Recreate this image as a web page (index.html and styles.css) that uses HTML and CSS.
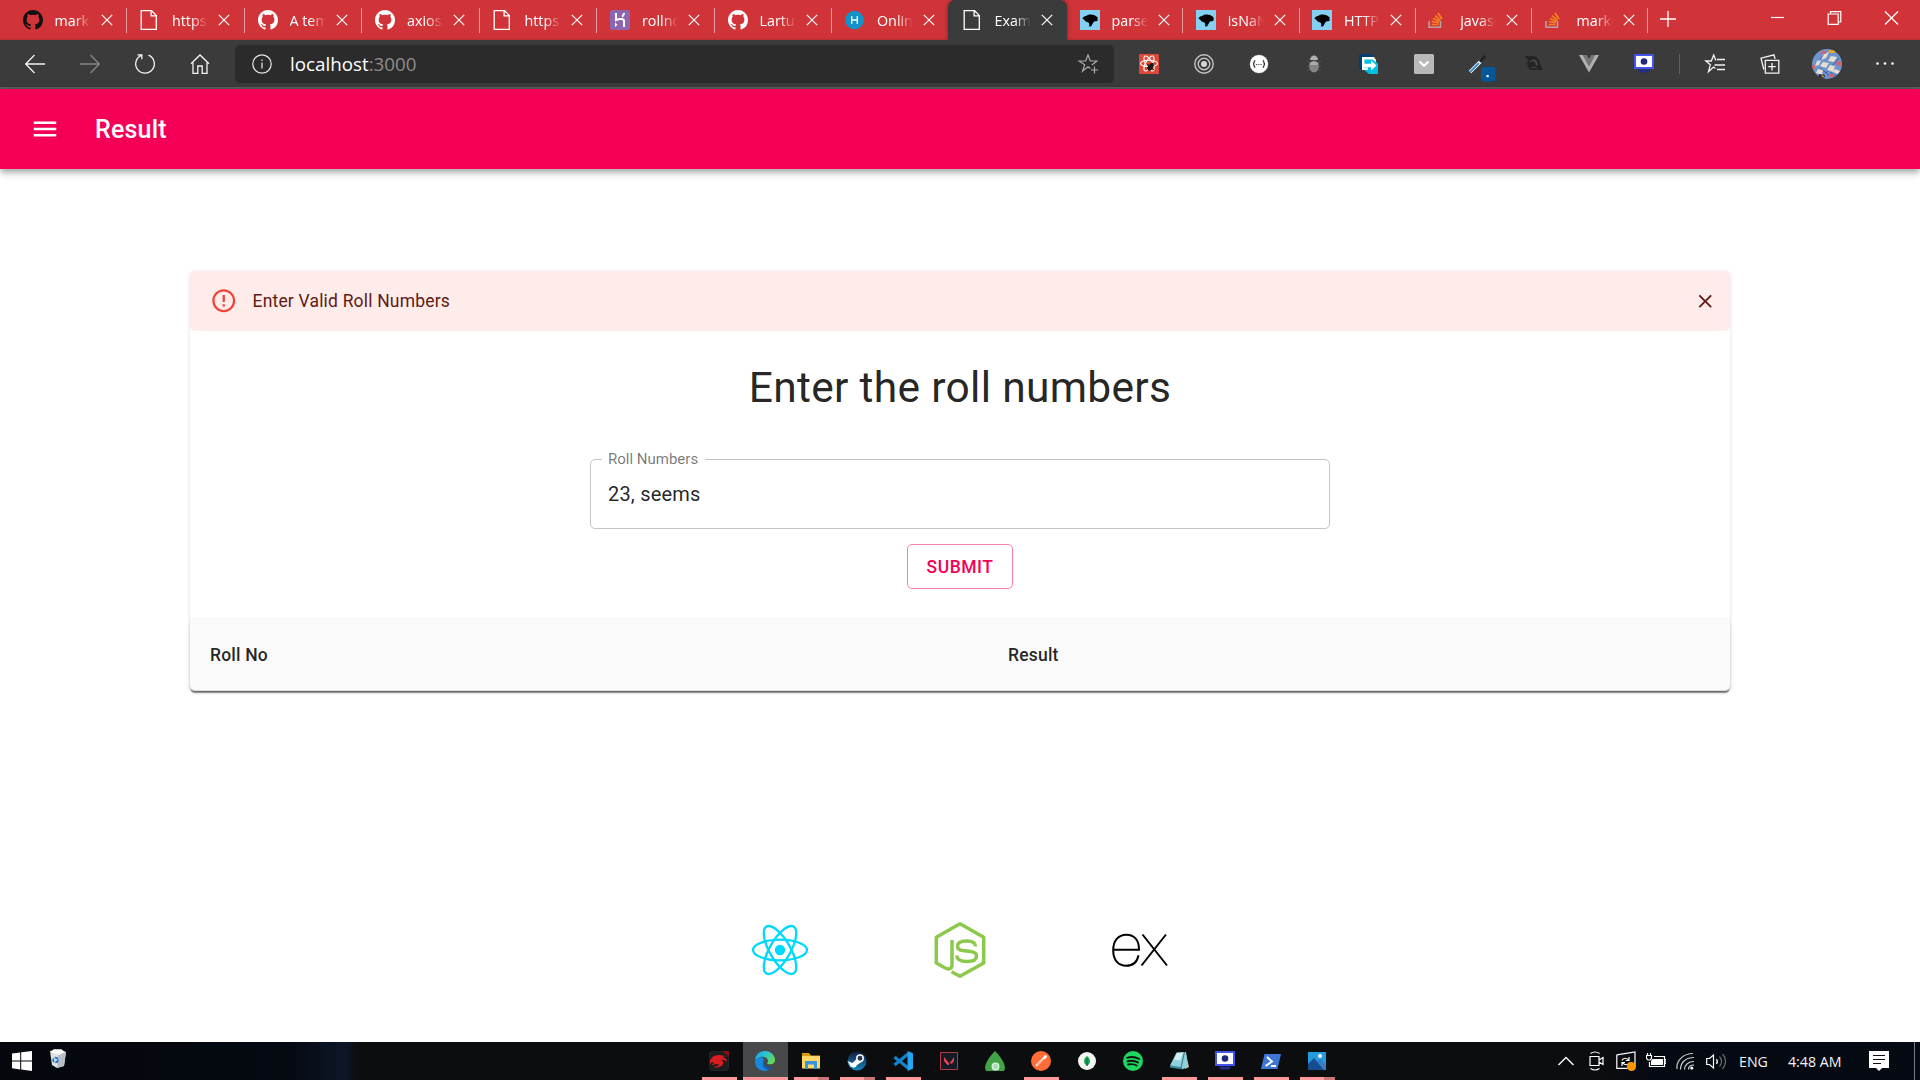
FILE: index.html
```html
<!DOCTYPE html>
<html lang="en">
<head>
<meta charset="utf-8">
<title>Exam Result</title>
<link rel="stylesheet" href="styles.css">
</head>
<body>
<svg class="defs" width="0" height="0">
  <symbol id="github" viewBox="0 0 16 16"><path fill="currentColor" d="M8 0C3.58 0 0 3.58 0 8c0 3.54 2.29 6.53 5.47 7.59.4.07.55-.17.55-.38 0-.19-.01-.82-.01-1.49-2.01.37-2.53-.49-2.69-.94-.09-.23-.48-.94-.82-1.13-.28-.15-.68-.52-.01-.53.63-.01 1.08.58 1.23.82.72 1.21 1.87.87 2.33.66.07-.52.28-.87.51-1.07-1.78-.2-3.64-.89-3.64-3.95 0-.87.31-1.59.82-2.15-.08-.2-.36-1.02.08-2.12 0 0 .67-.21 2.2.82.64-.18 1.32-.27 2-.27s1.36.09 2 .27c1.53-1.04 2.2-.82 2.2-.82.44 1.1.16 1.92.08 2.12.51.56.82 1.27.82 2.15 0 3.07-1.87 3.75-3.65 3.95.29.25.54.73.54 1.48 0 1.07-.01 1.93-.01 2.2 0 .21.15.46.55.38A8.01 8.01 0 0 0 16 8c0-4.42-3.58-8-8-8z"/></symbol>
  <symbol id="file" viewBox="0 0 20 20"><path fill="none" stroke="#fff" stroke-width="1.3" d="M1.200.7h10.400l4.700 4.700v13.900H1.200zM11.100.7v5.200h5.200"/></symbol>
  <symbol id="x" viewBox="0 0 12 12"><path stroke="#fff" stroke-width="1.2" d="M.8.8l10.4 10.4M11.2.8L.8 11.200"/></symbol>
  <symbol id="mdn" viewBox="0 0 20 20"><path fill="#83d0f2" d="M0 0h20v20H0z"/><path d="M2.500 8.500C3 6.800 4.500 6.400 6 6c1.500-1.500 4-1.900 6.500-1.300 2 .3 4 1.300 5.200 3l-.3 3.200-3.400.6-1 1.400-1.800 3.300-1.800.6-.4-3.800-2-1.100-1.700-.6-.6-1z"/></symbol>
  <symbol id="so" viewBox="0 0 20 20"><path fill="none" stroke="#b9a3a0" stroke-width="1.500" d="M1 11v6.300h11.500V11"/><path stroke="#f58220" stroke-width="1.700" d="M3.500 14.500h7M3.800 11.500l7 1.200M5 8.500l6.500 2.800M7 5.600l5.500 4.500M10 3l4 6"/></symbol>
  <symbol id="cam" viewBox="0 0 20 20"><path fill="#4454e8" d="M1 0h18a1 1 0 011 1v14H0V1a1 1 0 011-1z"/><path fill="#fff" d="M2 2h16v11H2z"/><circle cx="10" cy="7.500" r="3.300" fill="#1e2a78"/><path fill="#222d85" d="M4 15.500h12l-1.500 3h-9z"/></symbol>
</svg>

<header class="tabstrip">
  <div class="tab"><svg class="fav dark"><use href="#github"/></svg><span class="label">marke</span><svg class="x"><use href="#x"/></svg></div>
  <div class="tab"><svg class="fav"><use href="#file"/></svg><span class="label">https:/</span><svg class="x"><use href="#x"/></svg></div>
  <div class="tab"><svg class="fav"><use href="#github"/></svg><span class="label">A temp</span><svg class="x"><use href="#x"/></svg></div>
  <div class="tab"><svg class="fav"><use href="#github"/></svg><span class="label">axios/</span><svg class="x"><use href="#x"/></svg></div>
  <div class="tab"><svg class="fav"><use href="#file"/></svg><span class="label">https:/</span><svg class="x"><use href="#x"/></svg></div>
  <div class="tab"><svg class="fav" viewBox="0 0 20 20"><rect width="20" height="20" rx="2.500" fill="#8e66b0"/><path fill="none" stroke="#fff" stroke-width="2" d="M6 3v7.200c3-1.500 8-2 8 .800v6M14 3c0 1.500-.800 2.800-1.800 3.800"/><path fill="#fff" d="M5 12.500l2.500 2.300L5 17z"/></svg><span class="label">rollno</span><svg class="x"><use href="#x"/></svg></div>
  <div class="tab"><svg class="fav"><use href="#github"/></svg><span class="label">Lartur</span><svg class="x"><use href="#x"/></svg></div>
  <div class="tab no-sep"><svg class="fav" viewBox="0 0 20 20"><circle cx="9.500" cy="10" r="9.300" fill="#1193c9"/><path stroke="#fff" stroke-width="1.300" d="M6.700 6v8M12.300 6v8M6.700 10h5.600"/></svg><span class="label">Onlin</span><svg class="x"><use href="#x"/></svg></div>
  <div class="tab active"><svg class="fav"><use href="#file"/></svg><span class="label">Exam</span><svg class="x"><use href="#x"/></svg></div>
  <div class="tab after"><svg class="fav"><use href="#mdn"/></svg><span class="label">parse</span><svg class="x"><use href="#x"/></svg></div>
  <div class="tab after"><svg class="fav"><use href="#mdn"/></svg><span class="label">isNaN</span><svg class="x"><use href="#x"/></svg></div>
  <div class="tab after"><svg class="fav"><use href="#mdn"/></svg><span class="label">HTTP</span><svg class="x"><use href="#x"/></svg></div>
  <div class="tab after"><svg class="fav"><use href="#so"/></svg><span class="label">javasc</span><svg class="x"><use href="#x"/></svg></div>
  <div class="tab after"><svg class="fav"><use href="#so"/></svg><span class="label">marke</span><svg class="x"><use href="#x"/></svg></div>
  <svg class="plus" viewBox="0 0 16 16"><path stroke="#fff" stroke-width="1.300" d="M8 0v16M0 8h16"/></svg>
  <div class="window-controls">
    <svg viewBox="0 0 14 14"><path stroke="#fff" stroke-width="1.200" d="M.5 6.500h13"/></svg>
    <svg viewBox="0 0 14 14"><path fill="none" stroke="#fff" stroke-width="1.200" d="M.7 3h10v10.300H.7zM3 3V.7h10.300V11H11"/></svg>
    <svg viewBox="0 0 14 14"><path stroke="#fff" stroke-width="1.200" d="M.5.5l13 13M13.500.5l-13 13"/></svg>
  </div>
</header>

<nav class="toolbar">
  <div class="cell"><svg viewBox="0 0 20 20"><path d="M20 10H.800M9.500 1L.700 10l8.800 9"/></svg></div>
  <div class="cell dim"><svg viewBox="0 0 20 20"><path d="M0 10h19.200M10.500 1l8.800 9-8.800 9"/></svg></div>
  <div class="cell"><svg viewBox="0 0 20 20"><path d="M13.500 1.200a9.300 9.300 0 11-7.200.1M2.500.800h4.300v4.500"/></svg></div>
  <div class="cell"><svg viewBox="0 0 20 20"><path d="M1 9.800L10 1l9 8.800M3 8.500v10.800h4.800V12h4.400v7.300H17V8.500"/></svg></div>
  <div class="address">
    <svg class="info" viewBox="0 0 20 20"><circle cx="10" cy="10" r="9.200"/><path d="M10 8.500v6M10 5.500V7"/></svg>
    <span class="url">localhost<span class="port">:3000</span></span>
    <svg class="star" viewBox="0 0 20 20"><path d="M12.500 14.500L10 12.800l-5.500 4.500 2.200-6.500L1 7h6.700L10 .800 12.300 7H19l-5.200 4M16.500 12.500v7M13 16h7"/></svg>
  </div>
  <div class="cell"><svg class="flat" viewBox="0 0 20 20"><rect width="20" height="20" rx="1" fill="#db4a38"/><g fill="none" stroke="#fff" stroke-width="1.100"><ellipse cx="10" cy="9.500" rx="8.500" ry="3.300"/><ellipse cx="10" cy="9.500" rx="8.500" ry="3.300" transform="rotate(60 10 9.500)"/><ellipse cx="10" cy="9.500" rx="8.500" ry="3.300" transform="rotate(120 10 9.500)"/></g><ellipse cx="11.500" cy="13" rx="2.400" ry="4" transform="rotate(35 11.500 13)" fill="#181818"/><path stroke="#181818" d="M8 10l7 6M9 15l6-4M12 9l3 1M8 13l3 4"/></svg></div>
  <div class="cell"><svg class="flat" viewBox="0 0 20 20"><g fill="none" stroke="#c4c4c4" stroke-width="1.400"><circle cx="10" cy="10" r="9.200"/><circle cx="10" cy="10" r="5.800"/></g><circle cx="10" cy="10" r="3" fill="#d4d4d4"/></svg></div>
  <div class="cell"><svg class="flat" viewBox="0 0 20 20"><circle cx="10" cy="10" r="9.500" fill="#fff" stroke="#222" stroke-width=".6"/><g fill="none" stroke="#222" stroke-width="1.200"><path d="M6.300 6.500c-2 0-.5 3.500-2.300 3.500 1.800 0 .3 3.500 2.300 3.500M13.700 6.500c2 0 .5 3.500 2.300 3.500-1.800 0-.3 3.500-2.300 3.500"/><path stroke-dasharray="1 1.200" d="M7.200 10.500h6"/></g></svg></div>
  <div class="cell"><svg class="flat" viewBox="0 0 20 20"><path stroke="#555" d="M3 7l3 2M17 7l-3 2M3 12h3M14 12h3M3 17l3-2M17 17l-3-2"/><ellipse cx="10" cy="12.500" rx="4.800" ry="6" fill="#858585"/><path fill="#b0b0b0" d="M6 6c0-6 8-6 8 0z"/><path fill="#aaa" d="M5.500 10c1-3 8-3 9 0l-1 1H6z"/></svg></div>
  <div class="cell"><svg class="flat" viewBox="0 0 20 20"><path fill="#003f73" d="M0 0h13l2 3H3v13H2l-2-2z"/><path fill="#fff" d="M3 3h12l2 3v10H3z"/><path fill="#00bfe5" d="M5.500 5.500h8L19 9.500V20h-9l-5-4h4v-2.500H5.500z"/><path fill="#fff" d="M4 9.800h8V6.500l5.500 5-5.500 5v-3.300H4z"/></svg></div>
  <div class="cell"><svg class="flat" viewBox="0 0 20 20"><rect width="20" height="20" rx="1.500" fill="#b8b8b8"/><path fill="none" stroke="#fff" stroke-width="2.200" d="M5.500 7.500l4.500 4.200 4.500-4.200"/></svg></div>
  <div class="cell"><svg class="flat picker" viewBox="0 0 28 28"><path stroke="#fff" stroke-width="3.400" d="M2 18L13 7"/><path stroke="#2f8fd0" stroke-width="1.800" d="M2 18L11 9"/><path stroke="#222" stroke-width="3" d="M12 8l5-6"/><rect x="13" y="13" width="14.500" height="14.500" rx="2" fill="#06569a"/><path fill="#fff" d="M18.500 21h2.200v2.200h-2.200z"/></svg></div>
  <div class="cell"><svg class="flat" viewBox="0 0 20 20"><path fill="#242424" d="M1 2h8c4 0 7 4 7 8l3 6H9c-3 0-5-1-4-2.500L2.500 12l2-1.500L2 8l3-.5z"/><path fill="none" stroke="#484848" stroke-width="1.100" d="M6 8c3-3 7 0 6 3M8 6c4-1 6 3 5 6M7 13l6 1"/></svg></div>
  <div class="cell"><svg class="flat" viewBox="0 0 20 20"><path fill="#b0b0b0" d="M0 1h4l6 11 6-11h4L10 18.500z"/><path fill="#777" d="M4 1h3.800L10 5l2.200-4H16l-6 11z"/></svg></div>
  <div class="cell"><svg class="flat"><use href="#cam"/></svg></div>
  <div class="divider"></div>
  <div class="cell"><svg viewBox="0 0 20 20"><path d="M12 5.500h8M14 11h6M12 15.500h8M10.500 14.500L8.500 13l-5 4.800 1.800-7L.800 7h5.500l2.400-6 2.200 5.500M9.500 11H14"/></svg></div>
  <div class="cell"><svg viewBox="0 0 20 20"><path d="M5.300 6.300h13.500v12.800H5.300zM12 9v7.500M8.200 12.700h7.500M3.800 15.500L1 4.200 14 .800l1 4"/></svg></div>
  <div class="cell wide"><svg class="avatar" viewBox="0 0 30 30"><defs><clipPath id="round"><circle cx="15" cy="15" r="15"/></clipPath></defs><g clip-path="url(#round)"><path fill="#6f93cc" d="M0 0h30v30H0z"/><path stroke="#365ea7" d="M5 14l9-10M14 24L27 9M18 23l7 5M8 19l10 8"/><g fill="#e5dfcf"><path d="M12 5l5-2-3 6-5 2zM19 7l6 1-3 5-6-1zM11 13l6 1-3 5-6-2zM18 16l5 1-2 6-6-2zM5 12l4-1-2 5-4 1zM23 20l5 2-2 3-5-2zM6 20l5 1-1 5-6-2z"/></g><path fill="#d4646c" d="M9 2h5v3H9zM24 12l5 1v4l-4-1zM0 16h3v4H0zM17 25h5v3h-5z"/><path fill="#2d2b30" d="M7 25l6 1-1 4-6-1z"/><path fill="#e2a53e" d="M9 26l3 1-1 2zM16 1h7v3h-6z"/></g></svg></div>
  <div class="cell wide"><svg class="flat" viewBox="0 0 20 20"><g fill="#fff"><circle cx="2.500" cy="9.500" r="1.300"/><circle cx="10" cy="9.500" r="1.300"/><circle cx="17.500" cy="9.500" r="1.300"/></g></svg></div>
</nav>

<main class="page">
  <div class="appbar">
    <svg class="menu" viewBox="0 0 24 24"><path fill="#fff" d="M3 18h18v-2H3v2zm0-5h18v-2H3v2zm0-7v2h18V6H3z"/></svg>
    <h1 class="title">Result</h1>
  </div>
  <section class="card">
    <div class="alert">
      <svg class="alert-icon" viewBox="0 0 24 24"><path fill="#f44336" d="M11 15h2v2h-2zm0-8h2v6h-2zm.99-5C6.470 2 2 6.480 2 12s4.470 10 9.990 10C17.520 22 22 17.520 22 12S17.520 2 11.990 2zM12 20c-4.420 0-8-3.580-8-8s3.580-8 8-8 8 3.580 8 8-3.580 8-8 8z"/></svg>
      <span class="alert-text">Enter Valid Roll Numbers</span>
      <svg class="alert-close" viewBox="0 0 24 24"><path fill="#611a15" d="M19 6.410L17.590 5 12 10.590 6.410 5 5 6.410 10.590 12 5 17.590 6.410 19 12 13.410 17.590 19 19 17.590 13.410 12z"/></svg>
    </div>
    <div class="form">
      <h2 class="heading">Enter the roll numbers</h2>
      <div class="field"><span class="field-label">Roll Numbers</span><span>23, seems</span></div>
      <button class="submit">SUBMIT</button>
    </div>
    <div class="table-head"><span class="col-roll">Roll No</span><span>Result</span></div>
  </section>
  <footer class="logos">
    <svg viewBox="0 0 60 60"><circle cx="30" cy="30" r="5.200" fill="#00d8ff"/><g fill="none" stroke="#00d8ff" stroke-width="2.300"><ellipse cx="30" cy="30" rx="27" ry="10.300"/><ellipse cx="30" cy="30" rx="27" ry="10.300" transform="rotate(60 30 30)"/><ellipse cx="30" cy="30" rx="27" ry="10.300" transform="rotate(120 30 30)"/></g></svg>
    <svg viewBox="0 0 60 60"><g fill="none" stroke="#8cc84b" stroke-width="3.500"><path stroke-linejoin="round" d="M21.500 51.800L30 56.300 53.700 43V17.200L30 3.700 6.300 17.200V43l8.500 4.800c5 2.500 7.200.5 7.200-3V20"/><path d="M45.500 26.500c-.2-4.300-3-5.500-9-5.500-6.500 0-9 1.700-9 5.100 0 3.700 2.500 4.300 9 4.900 7.500.7 10 1.700 10 5.200 0 4.300-3.500 5.300-9.800 5.300-6.700 0-9.700-1.700-9.900-6"/></g></svg>
    <svg viewBox="0 0 60 60"><g fill="none" stroke="#000" stroke-width="2"><path d="M3.200 29.700h25.800c0-9.500-4.500-15-12.700-15-8 0-13.100 6-13.100 15.500 0 9.800 5 15.500 13 15.500 6.700 0 11-3.500 12.300-10.500"/><path d="M32.500 14.500L57 45.500M56 14.500L31.500 45.500"/></g></svg>
  </footer>
</main>

<footer class="taskbar">
  <div class="start">
    <svg viewBox="0 0 20 20"><path fill="#fff" d="M0 2.500l8.200-1.100V9.500H0zM9.200 1.200L20 0v9.500H9.200zM0 10.500h8.200v8L0 17.300zM9.200 10.500H20V20L9.200 18.600z"/></svg>
    <svg viewBox="0 0 20 20"><path fill="#dfe3e6" d="M2 2l8-2 8 3-2 14-7 2-5-3z"/><path fill="#b9bec4" d="M10 5l8-2-2 14-7 2z"/><path fill="#f8f8f8" d="M3 3l3-3 4 1 3-1 4 3-6 3z"/><circle cx="7.500" cy="11" r="2.300" fill="none" stroke="#1678c8" stroke-width="1.800" stroke-dasharray="3.500 1"/></svg>
  </div>
  <div class="apps">
    <div class="app run"><svg viewBox="0 0 20 20"><rect x=".4" y=".4" width="19.200" height="19.200" rx="3" fill="#1d1d1f" stroke="#333" stroke-width=".6"/><path fill="#7c1216" d="M13 0h7v6z"/><path fill="#d91c22" d="M1 10c1-4 5-6 9-6l7 1-4 1c3 1 5 2 5 5-2-2-4-2.500-6-2 2 1 3 2 2 4-1 3-6 4-10 3 3-.5 6-1 6-2.500-3-.5-6 0-8 1.500l3-3.500c-1-.5-3-.5-4 1.500z"/></svg></div>
    <div class="app run on"><svg viewBox="0 0 20 20"><defs><linearGradient id="edge-a" x2="1" y2=".6"><stop stop-color="#1d9ae8"/><stop offset=".5" stop-color="#2bc6d1"/><stop offset="1" stop-color="#62d959"/></linearGradient></defs><path fill="#0f5bb5" d="M1 12a10 10 0 0017 4c-6 2-9-1-9-5L6 5z"/><path fill="#1788dc" d="M0 10c1-5 8-5 9-1-3 4 0 10 5 10C6 22 0 17 0 10z"/><path fill="url(#edge-a)" d="M0 9C1 2 6 0 10 0c6 0 10 4.500 10 9 0 4-4 5-7 4-2-.6 0-1 0-3 0-3-4-5-8-4-2 .5-4 1.500-5 3z"/></svg></div>
    <div class="app multi"><svg viewBox="0 0 20 20"><path fill="#d69b0c" d="M1 2h7l2 2.500h9V9H1z"/><path fill="#ffd766" d="M1 5h18v12.500H1z"/><path fill="#3a94dc" d="M4 10h12v8h-3v-4.500H7V18H4z"/></svg></div>
    <div class="app multi"><svg viewBox="0 0 20 20"><defs><linearGradient id="steam" x2="0" y2="1"><stop stop-color="#131d3b"/><stop offset="1" stop-color="#1585ba"/></linearGradient></defs><circle cx="10" cy="10" r="9.500" fill="url(#steam)"/><path fill="#fff" d="M.5 10l5 2 5-5 4 4-6 4-2 1.500-3-1z"/><circle cx="13" cy="7.300" r="3.200" fill="#24365c" stroke="#fff" stroke-width="1.500"/><circle cx="7" cy="14" r="2.500" fill="#fff"/></svg></div>
    <div class="app run"><svg viewBox="0 0 20 20"><path fill="none" stroke="#1483ca" stroke-width="3.200" d="M15 3L1.500 14M1.500 6L15 17"/><path fill="#27a5f3" d="M14.500 0L20 2.300v15.400L14.500 20z"/></svg></div>
    <div class="app"><svg viewBox="0 0 20 20"><path fill="#151b26" stroke="#b43745" d="M1.500 1.500h17v17h-17z"/><path fill="#e84450" d="M5 6l5 6v2H8.500L5 10zM15 6v4l-2 2.500h-2.500z"/></svg></div>
    <div class="app"><svg viewBox="0 0 20 20"><path fill="#43a347" d="M10 0c5 5 10 12 10 17l-1 3H1l-1-3C0 12 5 5 10 0z"/><circle cx="10.500" cy="15.500" r="3.300" fill="#a9dfba" stroke="#dff5e4" stroke-width="1.300"/></svg></div>
    <div class="app run"><svg viewBox="0 0 20 20"><circle cx="10" cy="10" r="10" fill="#ff6c37"/><path stroke="#ffe0d2" stroke-width="2.400" d="M5 15l8-8"/><path stroke="#fff" stroke-width="3" stroke-linecap="round" d="M13.500 6.500l1-1"/><path stroke="#ff6c37" stroke-width=".6" d="M6 14l7-6"/></svg></div>
    <div class="app"><svg viewBox="0 0 20 20"><circle cx="10" cy="10" r="9" fill="#f5f5f5"/><path fill="#13a455" d="M10 5c4 3.500 4 7 0 10-4-3-4-6.500 0-10z"/><path stroke="#166b36" d="M10 7v8"/></svg></div>
    <div class="app"><svg viewBox="0 0 20 20"><circle cx="10" cy="10" r="10" fill="#1ed760"/><path fill="none" stroke="#101510" stroke-width="1.900" stroke-linecap="round" d="M4 6.800c4-1.200 8.500-.9 12.200 1.200M4.500 10.300c3.600-1 7.300-.7 10.400 1.100M5 13.500c3-.7 6-.5 8.700 1"/></svg></div>
    <div class="app run"><svg viewBox="0 0 20 20"><path fill="#d9b98c" d="M17 3l3 13-4 2z"/><path fill="#8ed0dc" d="M7.500 1.500L17 1l2 15-5 2-13-3.500z"/><path fill="#3f8aa0" d="M1 14.500L12 16l2 2.500-13-2z"/><path fill="#d2f1f4" d="M8 2l6-.5-3 8-6-1z"/><path fill="none" stroke="#24586b" stroke-width=".8" d="M15.500 1L12 17"/></svg></div>
    <div class="app run"><svg><use href="#cam"/></svg></div>
    <div class="app run"><svg viewBox="0 0 20 20"><path fill="#3d78d6" d="M3.500 3H20l-3.500 15H0z"/><path fill="none" stroke="#fff" stroke-width="1.900" d="M6 6l5 4.500-6.500 4.500M10 15h5"/></svg></div>
    <div class="app multi"><svg viewBox="0 0 20 20"><path fill="#239bdc" d="M1 1h18v18H1z"/><path fill="#174b8f" d="M1 13l6-6 10 12H1z"/><path fill="#3a7cc4" d="M10 10l3-2 6 6v5h-2z"/><circle cx="13" cy="5" r="2" fill="#fff"/></svg></div>
  </div>
  <div class="tray">
    <svg class="chev" viewBox="0 0 20 20"><path d="M2.500 14L10 6.500l7.500 7.500"/></svg>
    <svg viewBox="0 0 20 20"><path d="M4 5.500h9v9H4zM13 9l4-2.500v7L13 11M4.500 2.500c3-2 6-2 9 0M4.500 17.500c3 2 6 2 9 0"/></svg>
    <svg viewBox="0 0 20 20"><path d="M.8 3.800L19 1v15M.8 3.800v13.500h11M6 9.500c1-3 5-3 7 0M13 6v3.500H9.700M13.500 11.500c-1 3-5 3-7 0M6 15v-3.500h3"/><circle cx="15.500" cy="15.500" r="4.500" fill="#ff9800" stroke="none"/></svg>
    <svg viewBox="0 0 20 20"><path fill="#fff" stroke="none" d="M6.500 8h10.500v6H5v-4z"/><path d="M8 5.500h10.500v10H3.500V11M18.500 8.500H20v4h-1.500M.5 4.500h5v3L4 9H2L.5 7.500zM1.500 2v2.500M4.500 2v2.500"/></svg>
    <svg viewBox="0 0 20 20"><g opacity=".8"><path d="M4.500 18.500C4.500 11 10 6.500 18 6.500M8.500 18.500c0-4.500 4-8 9.500-8M1 18C0 9 8 2.500 17 2.500M12.500 18.500c0-2.500 2-4.500 5.500-4.500"/></g><circle cx="15.800" cy="17" r="1.600" fill="#fff" stroke="none"/></svg>
    <svg class="volume" viewBox="0 0 20 20"><path d="M.7 7.500h2.800L7.500 4v13l-4-3.500H.7zM10.500 8c1 1.500 1 3.500 0 5"/><path opacity=".4" d="M13.500 5.500c2.500 3 2.500 7 0 10M16.500 3c4 4.500 4 10.500 0 15"/></svg>
    <span class="lang">ENG</span>
    <span class="clock">4:48 AM</span>
    <svg class="notice" viewBox="0 0 20 20"><path fill="#fff" stroke="none" d="M0 0h20v17h-7l-3 3-3-3H0z"/><path stroke="#090c13" d="M4 4.500h12M4 8.500h12M4 12.500h8"/></svg>
    <span class="desktop"></span>
  </div>
</footer>
</body>
</html>
```
FILE: styles.css
```css
* { box-sizing: border-box; }
body {
  margin: 0;
  width: 1920px;
  height: 1080px;
  display: flex;
  flex-direction: column;
  overflow: hidden;
  background: #fff;
  font-family: Roboto, sans-serif;
}
svg { display: block; flex: none; }
h1, h2 { margin: 0; }
.defs { display: none; }

/* Browser tab strip */
.tabstrip {
  height: 40px;
  flex: none;
  display: flex;
  padding-left: 9.5px;
  background: linear-gradient(#d13438 37px, #b92f32);
  color: #fff;
  font: 14.3px "Open Sans", "Noto Sans", sans-serif;
}
.tab {
  width: 117.5px;
  flex: none;
  display: flex;
  align-items: center;
  padding-left: 13px;
  background: linear-gradient(#e99b9d, #e99b9d) right 8px / 1px 25px no-repeat;
}
.tab.after { width: 116.25px; padding-left: 12.5px; }
.tab.no-sep { background: none; }
.tab.active {
  width: 119.5px;
  margin-left: -2px;
  padding-left: 15px;
  background: #3b3b3b;
  border-radius: 7px 7px 0 0;
  box-shadow: 0 0 4px rgba(0, 0, 0, .4);
}
.fav { width: 20px; height: 20px; color: #fff; }
.fav.dark { color: #111; }
.label {
  width: 36px;
  margin: 0 10px 0 12px;
  overflow: hidden;
  white-space: nowrap;
  line-height: 39px;
  -webkit-mask-image: linear-gradient(90deg, #000 55%, transparent);
  mask-image: linear-gradient(90deg, #000 55%, transparent);
}
.x { width: 12px; height: 12px; }
.plus { width: 16px; height: 16px; margin: 11px 0 0 11.5px; }
.window-controls { margin-left: auto; display: flex; height: 36px; }
.window-controls svg { width: 57px; height: 14px; margin-top: 11px; }

/* Navigation toolbar */
.toolbar {
  height: 49px;
  flex: none;
  display: flex;
  align-items: center;
  padding: 1px 0 0 7.5px;
  background: #3b3b3b;
  border-bottom: 2px solid #5c5c5c;
}
.cell { width: 55px; flex: none; display: flex; justify-content: center; }
.cell.wide { width: 58px; }
.cell svg { width: 20px; height: 20px; fill: none; stroke: #f4f4f4; stroke-width: 1.3; overflow: visible; }
.cell svg.flat, .cell svg.avatar { stroke: none; stroke-width: 1; }
.cell.dim svg { stroke: #888; }
.cell svg.avatar { width: 30px; height: 30px; }
.cell svg.picker { width: 28px; height: 28px; margin: 8px 0 0 6px; }
.address {
  width: 879px;
  height: 38px;
  flex: none;
  margin: 0 7.5px;
  padding: 0 16px 0 17px;
  display: flex;
  align-items: center;
  background: #2b2b2b;
  border-radius: 5px;
}
.address svg { width: 20px; height: 20px; fill: none; stroke: #e8e8e8; stroke-width: 1.2; }
.address .star { margin-left: auto; stroke: #aaa; }
.url { margin-left: 18px; color: #fff; font: 18.8px "Open Sans", "Noto Sans", sans-serif; }
.port { color: #8d8d8d; }
.divider { width: 1px; height: 20px; margin: 0 8px 0 7px; background: #606060; }

/* Page */
.page { flex: 1; display: flex; flex-direction: column; align-items: center; background: #fff; }
.appbar {
  width: 100%;
  height: 80px;
  flex: none;
  display: flex;
  align-items: center;
  gap: 35px;
  padding-left: 30px;
  background: #f50057;
  box-shadow: 0 2.5px 5px -1px rgba(0, 0, 0, .2), 0 5px 6px rgba(0, 0, 0, .14), 0 1px 12px rgba(0, 0, 0, .12);
}
.menu { width: 30px; height: 30px; }
.title { padding-top: 2px; color: #fff; font-size: 25px; font-weight: 500; letter-spacing: .0075em; line-height: 40px; }
.card {
  width: 1540px;
  margin-top: 102px;
  border-radius: 5px;
  box-shadow: 0 2.5px 1px -1px rgba(0, 0, 0, .2), 0 1px 1px rgba(0, 0, 0, .14), 0 1px 4px rgba(0, 0, 0, .12);
}
.alert {
  height: 60px;
  display: flex;
  align-items: center;
  padding: 0 14px 0 20px;
  background: #fdecea;
  border-radius: 5px;
}
.alert-icon { width: 27.5px; height: 27.5px; margin-right: 15px; }
.alert-text { color: #611a15; font-size: 17.5px; letter-spacing: .01071em; line-height: 25px; }
.alert-close { width: 22.5px; height: 22.5px; margin-left: auto; }
.form {
  height: 288px;
  padding-top: 31px;
  display: flex;
  flex-direction: column;
  align-items: center;
  color: rgba(0, 0, 0, .87);
}
.heading { font-size: 42.5px; font-weight: 400; line-height: 52.5px; letter-spacing: .00735em; }
.field {
  width: 740px;
  height: 70px;
  margin: 44.5px 0 15px;
  padding: 0 17px;
  display: flex;
  align-items: center;
  position: relative;
  border: 1px solid #c4c4c4;
  border-radius: 5px;
  font-size: 20px;
  letter-spacing: .00938em;
}
.field-label {
  position: absolute;
  top: -10px;
  left: 11px;
  padding: 0 7px 0 6px;
  background: #fff;
  color: rgba(0, 0, 0, .54);
  font-size: 15px;
  letter-spacing: 0;
  line-height: 18px;
}
.submit {
  width: 106px;
  height: 45px;
  padding: 0;
  background: transparent;
  border: 1px solid rgba(245, 0, 87, .5);
  border-radius: 5px;
  color: #f50057;
  font: 500 17.5px Roboto, sans-serif;
  letter-spacing: .02857em;
}
.table-head {
  height: 72px;
  display: grid;
  grid-template-columns: 798px 1fr;
  align-items: center;
  padding-left: 20px;
  background: #fafafa;
  border-bottom: 1px solid #e0e0e0;
  border-radius: 5px;
  box-shadow: 0 2.5px 1px -1px rgba(0, 0, 0, .2), 0 1px 1px rgba(0, 0, 0, .14), 0 1px 4px rgba(0, 0, 0, .12);
  color: rgba(0, 0, 0, .87);
  font-size: 17.5px;
  font-weight: 500;
  letter-spacing: .01071em;
}
.logos { margin-top: auto; padding-bottom: 62px; display: flex; gap: 120px; }
.logos svg { width: 60px; height: 60px; }

/* Windows taskbar */
.taskbar {
  height: 38px;
  flex: none;
  display: flex;
  background: linear-gradient(90deg, #04070c 0, #050911 290px, #0d1628 345px, #0b0d0e 358px, #0c0d0f 1600px, #050912 1660px, #060a13);
}
.start { width: 696px; display: flex; gap: 16px; padding: 9px 0 0 12px; }
.start svg { width: 20px; height: 20px; }
.start svg + svg { margin-top: -2px; }
.apps { display: flex; }
.app { width: 46px; display: flex; justify-content: center; padding-top: 9px; }
.app svg { width: 20px; height: 20px; }
.app.run { background: linear-gradient(#ff999c, #ff999c) 6px 100% / 35px 3px no-repeat; }
.app.run.on { background: linear-gradient(#ff999c, #ff999c) 1px 100% / 45px 3px no-repeat, linear-gradient(#48494b, #48494b) 1px 0 / 45px 38px no-repeat; }
.app.multi { background: linear-gradient(90deg, #ff999c 24px, #c97579 24px) 6px 100% / 35px 3px no-repeat; }
.tray {
  margin-left: auto;
  display: flex;
  align-items: center;
  gap: 10px;
  color: #f2f2f2;
  font: 14.2px "Open Sans", "Noto Sans", sans-serif;
}
.tray svg { width: 20px; height: 20px; fill: none; stroke: #fff; stroke-width: 1.2; }
.tray .chev { stroke-width: 1.4; }
.lang { width: 29px; margin-left: 3px; }
.clock { width: 56px; margin-left: 10px; white-space: nowrap; }
.tray .notice { margin-left: 15px; }
.desktop { width: 6px; align-self: stretch; margin-left: 15px; border-left: 1px solid #777a80; }
```
